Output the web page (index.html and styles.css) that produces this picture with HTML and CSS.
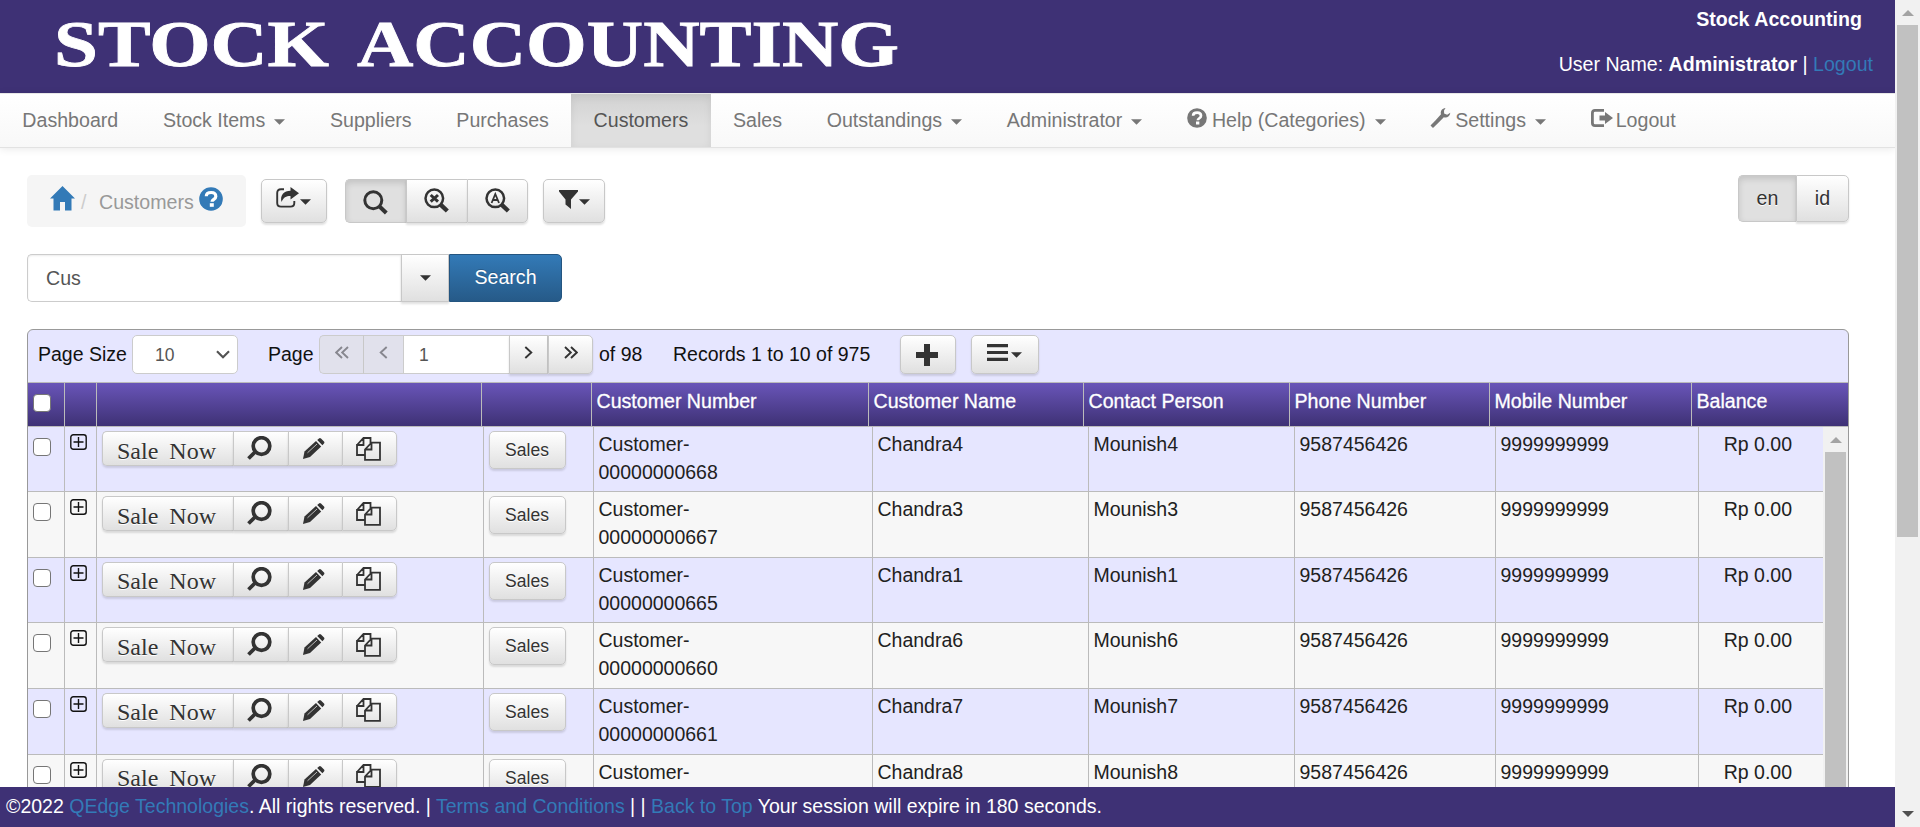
FILE: index.html
```html
<!DOCTYPE html>
<html lang="en">
<head>
<meta charset="utf-8">
<title>Customers - Stock Accounting</title>
<link rel="stylesheet" href="styles.css">
</head>
<body>
<svg width="0" height="0" class="defs" aria-hidden="true">
  <symbol id="i-home" viewBox="0 0 25 25"><path d="M12.5 0L25 12.5H21.5V24.5H15V16H10V24.5H3.5V12.5H0Z"/></symbol>
  <symbol id="i-help" viewBox="0 0 24 24"><circle cx="12" cy="12" r="11.8"/><path class="cut" d="M7.3 9.2C7.3 6.5 9.3 5.5 12.2 5.5S16.8 7 16.8 9.4C16.8 12.4 13 12.2 13 14.8" stroke-width="3.2"/><rect x="10.8" y="16.2" width="4" height="3.6" fill="#fff"/></symbol>
  <symbol id="i-share" viewBox="0 0 23 21"><path class="line" d="M8 2.2H5Q1.2 2.2 1.2 6V16Q1.2 19.6 5 19.6H14.5Q18.3 19.6 18.3 16V14" stroke-width="1.9"/><path d="M14.5 0L23 6.3L14.5 12.6V9C10 9 7.5 10.5 5.5 15C3.8 8 8 3.7 14.5 3.7Z"/></symbol>
  <symbol id="i-search" viewBox="0 0 25 25"><circle class="line" cx="10.3" cy="10.3" r="8.5" stroke-width="3"/><path class="line" d="M16 16L23.3 23" stroke-width="4"/></symbol>
  <symbol id="i-searchx" viewBox="0 0 25 25"><circle class="line" cx="10.3" cy="10.3" r="8.8" stroke-width="2.5"/><path class="line" d="M6.7 7L14 13.7M14 7L6.7 13.7" stroke-width="3"/><path class="line" d="M16.3 16.3L23.3 23" stroke-width="4.4"/></symbol>
  <symbol id="i-searcha" viewBox="0 0 25 25"><circle class="line" cx="10.3" cy="10.3" r="8.8" stroke-width="2.5"/><path class="line" d="M6.6 15L10.3 6L14 15M8 12H12.8" stroke-width="1.8"/><path class="line" d="M16.3 16.3L23.3 23" stroke-width="4.4"/></symbol>
  <symbol id="i-filter" viewBox="0 0 19 19"><path d="M0 0H19V1.5L12 9.5V19L6.5 14.5V9.5L0 1.5Z"/></symbol>
  <symbol id="i-caret" viewBox="0 0 12 6"><path d="M0 0H12L6 6Z"/></symbol>
  <symbol id="i-wrench" viewBox="0 0 21 21"><path d="M15.8 0C12 .3 10.2 3.4 11 6.5L5.4 12.8L0 18.4L2.6 21L8.3 15.4L14 9.8C17.3 10.8 20.4 8.7 20.8 5L17.5 7.2L14.3 5.8L14.2 2.6Z"/></symbol>
  <symbol id="i-logout" viewBox="0 0 22 18"><path class="line" d="M13 1.4H4Q1.4 1.4 1.4 4V14Q1.4 16.6 4 16.6H13" stroke-width="2.8"/><path d="M8.5 6.5H14V3L22 9L14 15V11.5H8.5Z"/></symbol>
  <symbol id="i-plus" viewBox="0 0 22 22"><path d="M8 0H14V8H22V14H14V22H8V14H0V8H8Z"/></symbol>
  <symbol id="i-bars" viewBox="0 0 21 17"><path d="M0 0H21V3.2H0ZM0 6.9H21V10.1H0ZM0 13.8H21V17H0Z"/></symbol>
  <symbol id="i-lens" viewBox="0 0 25 24"><circle class="line" cx="14.5" cy="10" r="8.3" stroke-width="3.7"/><path class="line" d="M8.5 15.5L1.5 22.5" stroke-width="3.8"/></symbol>
  <symbol id="i-pencil" viewBox="0 0 22 21"><path d="M1.5 13.5L13 3L18.2 8.5L7 19L0 21Z"/><path d="M14.2 2L16 .4Q17 -.3 18 .6L21 3.6Q21.8 4.6 21 5.5L19.4 7.3Z"/><path class="hair" d="M4.5 14.8L14 6"/></symbol>
  <symbol id="i-copy" viewBox="0 0 25 24"><path class="line" d="M1 8L7.5 1H14.5V6M9 18H1V8H7.5V1M9 12.5L15.5 5.6H24V22.8H9ZM9 12.5H15.5V5.6" stroke-width="1.8"/></symbol>
  <symbol id="i-expand" viewBox="0 0 17 16"><rect class="line" x=".8" y=".8" width="15.4" height="14.4" rx="2.5" stroke-width="1.4"/><path class="line" d="M8.5 3V13M3.5 8H13.5" stroke-width="1.4"/></symbol>
  <symbol id="i-chev" viewBox="0 0 9 13"><path class="line" d="M1.3 1L7.3 6.5L1.3 12" stroke-width="1.9"/></symbol>
  <symbol id="i-chev2" viewBox="0 0 14 13"><path class="line" d="M1 1L6.8 6.5L1 12M7 1L12.8 6.5L7 12" stroke-width="1.9"/></symbol>
  <symbol id="i-down" viewBox="0 0 14 9"><path class="line" d="M1 1.2L7 7.2L13 1.2" stroke-width="2.2"/></symbol>
</svg>
<div class="window">
  <div class="page">
    <header class="banner">
      <svg class="logo" width="860" height="70" viewBox="0 0 860 70"><text x="0" y="61" textLength="275" lengthAdjust="spacingAndGlyphs">STOCK</text><text x="303" y="61" textLength="542" lengthAdjust="spacingAndGlyphs">ACCOUNTING</text></svg>
      <div class="user">
        <div class="company">Stock Accounting</div>
        <div>User Name: <b>Administrator</b> | <a>Logout</a></div>
      </div>
    </header>
    <nav class="menu">
      <a class="item">Dashboard</a>
      <a class="item">Stock Items<svg class="caret"><use href="#i-caret"/></svg></a>
      <a class="item">Suppliers</a>
      <a class="item">Purchases</a>
      <a class="item active">Customers</a>
      <a class="item">Sales</a>
      <a class="item">Outstandings<svg class="caret"><use href="#i-caret"/></svg></a>
      <a class="item">Administrator<svg class="caret"><use href="#i-caret"/></svg></a>
      <a class="item"><svg class="nav-help"><use href="#i-help"/></svg>Help (Categories)<svg class="caret"><use href="#i-caret"/></svg></a>
      <a class="item"><svg class="nav-wrench"><use href="#i-wrench"/></svg>Settings<svg class="caret"><use href="#i-caret"/></svg></a>
      <a class="item"><svg class="nav-logout"><use href="#i-logout"/></svg>Logout</a>
    </nav>
    <main class="content">
      <div class="tools">
        <div class="crumbs"><svg class="home"><use href="#i-home"/></svg><span class="slash">/</span><span class="here">Customers</span><svg class="crumb-help"><use href="#i-help"/></svg></div>
        <div class="btn share"><svg class="share-icon"><use href="#i-share"/></svg><svg class="caret"><use href="#i-caret"/></svg></div>
        <div class="group search-group">
          <div class="btn on"><svg class="lens25"><use href="#i-search"/></svg></div>
          <div class="btn"><svg class="lens25"><use href="#i-searchx"/></svg></div>
          <div class="btn"><svg class="lens25"><use href="#i-searcha"/></svg></div>
        </div>
        <div class="btn filter"><svg class="filter-icon"><use href="#i-filter"/></svg><svg class="caret"><use href="#i-caret"/></svg></div>
        <div class="group lang"><div class="btn on">en</div><div class="btn">id</div></div>
      </div>
      <div class="search">
        <div class="query">Cus</div>
        <div class="btn drop"><svg class="caret"><use href="#i-caret"/></svg></div>
        <div class="btn go">Search</div>
      </div>
      <section class="panel">
        <div class="pager">
          <span class="size-label">Page Size</span>
          <div class="select">10<svg class="down"><use href="#i-down"/></svg></div>
          <span class="page-label">Page</span>
          <div class="group pages">
            <div class="btn off first"><svg class="chev2 flip"><use href="#i-chev2"/></svg></div>
            <div class="btn off prev"><svg class="chev flip"><use href="#i-chev"/></svg></div>
            <div class="number">1</div>
            <div class="btn next"><svg class="chev"><use href="#i-chev"/></svg></div>
            <div class="btn last"><svg class="chev2"><use href="#i-chev2"/></svg></div>
          </div>
          <span class="of">of 98</span>
          <span class="records">Records 1 to 10 of 975</span>
          <div class="btn add"><svg class="plus"><use href="#i-plus"/></svg></div>
          <div class="btn list"><svg class="bars"><use href="#i-bars"/></svg><svg class="caret"><use href="#i-caret"/></svg></div>
        </div>
        <div class="head">
          <div><span class="check"></span></div><div></div><div></div><div></div>
          <div>Customer Number</div><div>Customer Name</div><div>Contact Person</div><div>Phone Number</div><div>Mobile Number</div><div>Balance</div>
        </div>
        <div class="body">
          <div class="rows" id="rows"></div>
          <div class="bar inner"><svg class="arrow"><use href="#i-caret"/></svg><div class="thumb"></div></div>
        </div>
      </section>
    </main>
    <footer class="footer">©2022 <a>QEdge Technologies</a>. All rights reserved. | <a>Terms and Conditions</a> | | <a>Back to Top</a> Your session will expire in 180 seconds.</footer>
  </div>
  <div class="bar outer"><svg class="arrow"><use href="#i-caret"/></svg><div class="thumb"></div><svg class="arrow bottom"><use href="#i-caret"/></svg></div>
</div>
<script src="rows.js"></script>
</body>
</html>
```

FILE: styles.css
```css
* { box-sizing: border-box; }
body { margin: 0; font: 19.6px/28px "Liberation Sans", Arial, sans-serif; color: #212121; background: #fff; overflow: hidden; }
svg { fill: currentColor; flex: none; display: block; }
.defs { position: absolute; }
.line { fill: none; stroke: currentColor; }
.cut { fill: none; stroke: #fff; }
.hair { fill: none; stroke: #bbb; stroke-width: 1; }
a { color: #337ab7; }
.window { display: flex; height: 827px; }
.page { width: 1895px; display: flex; flex-direction: column; }

.banner { height: 93px; flex: none; background: #3e3175; color: #fff; display: flex; justify-content: space-between; }
.logo { margin: 5px 0 0 54px; overflow: visible; }
.logo text { font: bold 65px "Liberation Serif", serif; fill: #fff; stroke: #fff; stroke-width: .8; }
.user { padding: 5px 22px 0 0; text-align: right; }
.company { font-weight: bold; margin: 0 11px 17px 0; }

.menu { height: 55px; flex: none; display: flex; border-top: 1px solid #e7e7e7; border-bottom: 1px solid #e2e2e2; background: linear-gradient(#fff, #f8f8f8); box-shadow: 0 1px 8px rgba(0,0,0,.09); }
.item { display: flex; align-items: center; padding: 0 22.35px 2px; color: #777; }
.item.active { color: #555; background: linear-gradient(#d2d2d2, #dfdfdf 60%); box-shadow: inset 0 3px 9px rgba(0,0,0,.07); }
.caret { width: 11px; height: 6px; }
.item .caret { margin: 5px 0 0 9px; }
.nav-help { width: 20px; height: 20px; margin: -4px 5px 0 0; }
.nav-wrench { width: 21px; height: 20px; margin: -4px 4px 0 0; }
.nav-logout { width: 22px; height: 18px; margin: -3px 3px 0 0; }

.content { flex: 1; min-height: 0; overflow: hidden; padding: 27px 46px 0 27px; }
.btn { display: flex; align-items: center; justify-content: center; border: 1px solid #c8c8c8; border-radius: 5px; color: #333; background: linear-gradient(#fff, #e0e0e0); box-shadow: 0 2px 2px rgba(0,0,0,.12); text-shadow: 0 1px 0 #fff; }
.group { display: flex; }
.group > .btn { border-radius: 0; }
.group > .btn + .btn { border-left: 1px solid #c8c8c8; border-right: 0; }
.group > :first-child { border-radius: 5px 0 0 5px; border-right: 0; }
.group > .btn:last-child { border-radius: 0 5px 5px 0; border-right: 1px solid #c8c8c8; }
.group > .on { background: #e0e0e0; box-shadow: inset 0 3px 6px rgba(0,0,0,.13); }

.tools { display: flex; align-items: flex-start; height: 79px; }
.crumbs { width: 219px; height: 52px; border-radius: 5px; background: #f5f5f5; display: flex; padding-left: 23px; }
.home { width: 25px; height: 25px; margin-top: 11px; color: #337ab7; }
.slash { margin: 13px 0 0 6px; color: #ccc; width: 18px; }
.here { margin-top: 13px; color: #999; width: 100px; }
.crumb-help { width: 24px; height: 24px; margin: 12px 0 0 0; color: #337ab7; }
.share { width: 66px; height: 44px; margin: 4px 0 0 15px; padding-right: 2px; }
.share-icon { width: 23px; height: 21px; margin-top: -7px; }
.tools .btn .caret { margin: 2px 0 0 1px; }
.search-group { margin: 4px 0 0 18px; height: 44px; }
.search-group .btn { width: 61px; padding-right: 1px; }
.lens25 { width: 25px; height: 25px; margin-top: -2px; }
.on .lens25 { margin-top: 2px; }
.filter { width: 62px; height: 44px; margin: 4px 0 0 15px; }
.filter-icon { width: 19px; height: 19px; margin-top: -4px; }
.lang { margin-left: auto; height: 47px; }
.lang .btn { width: 58px; padding-bottom: 2px; }
.lang .btn:last-child { width: 53px; }

.search { display: flex; height: 48px; }
.query { width: 374px; border: 1px solid #ccc; border-right: 0; border-radius: 5px 0 0 5px; padding: 9px 18px; color: #555; box-shadow: inset 0 1px 2px rgba(0,0,0,.08); }
.drop { width: 48px; border-radius: 0; }
.go { width: 113px; border-radius: 0 5px 5px 0; border-color: #245580; color: #fff; background: linear-gradient(#337ab7, #265a88); text-shadow: 0 -1px 0 rgba(0,0,0,.2); box-shadow: none; padding-bottom: 2px; }

.panel { margin-top: 27px; width: 1822px; height: 600px; border: 1px solid #999; border-radius: 6px 6px 0 0; background: #e6e6ff; overflow: hidden; display: flex; flex-direction: column; }
.pager { display: flex; height: 53px; flex: none; padding-top: 5px; border-bottom: 1px solid #bbb; color: #111; line-height: 39px; font-size: 19.5px; }
.pager .btn, .pager .number, .select { height: 39px; }
.size-label { width: 94px; margin-left: 10px; }
.select { width: 106px; border: 1px solid #ccc; border-radius: 5px; background: #fff; color: #555; font-size: 17.5px; line-height: 38px; padding: 0 7px 0 22px; display: flex; justify-content: space-between; align-items: center; }
.down { width: 14px; height: 9px; }
.page-label { margin-left: 30px; width: 51px; }
.first { width: 44px; } .prev { width: 40px; } .next { width: 39px; } .last { width: 45px; }
.number { width: 106px; background: #fff; border: 1px solid #ccc; border-right: 0; padding-left: 15px; color: #555; font-size: 17.5px; line-height: 38px; }
.pages > .off { background: #e1e1ec; color: #87878f; border-color: #ccc; box-shadow: none; }
.chev { width: 9px; height: 13px; margin-top: -4px; }
.chev2 { width: 14px; height: 13px; margin-top: -4px; }
.flip { transform: scaleX(-1); }
.of { margin-left: 6px; width: 74px; }
.records { width: 227px; }
.add { width: 56px; padding-right: 2px; }
.plus { width: 22px; height: 22px; margin-top: 1px; }
.list { width: 68px; margin-left: 15px; padding-right: 2px; }
.bars { width: 21px; height: 17px; margin: -4px 3px 0 0; }
.list .caret { margin-top: 1px; }

.head { display: grid; grid-template-columns: 37px 32px 385px 110px 277px 215px 206px 200px 202px 1fr; height: 44px; flex: none; background: linear-gradient(#6955b8, #3e3175); color: #fff; border-bottom: 1px solid #bbb; line-height: 36px; -webkit-text-stroke: .3px #fff; }
.head > div { border-right: 1px solid #bbb; padding-left: 4.5px; }
.head > div:last-child { border-right: 0; }
.check { display: block; width: 18px; height: 18px; border: 1.5px solid #767676; border-radius: 4px; background: #fff; }
.head .check { margin: 11px 0 0 0; }
.body { display: flex; flex: 1; min-height: 0; }
.rows { width: 1795px; font-size: 19.5px; }
.row { display: grid; grid-template-columns: 37px 32px 387px 110px 279px 216px 206px 201px 203px 1fr; height: 65.6px; border-bottom: 1px solid #bbb; }
.row:first-child { height: 65.2px; }
.row:nth-child(even) { background: #f7f7f7; }
.row > div { border-right: 1px solid #bbb; padding: 3px 4px 0 4.5px; }
.row > div:last-child { border-right: 0; text-align: right; padding-right: 31px; }
.row .check { margin-top: 8px; }
.expand { width: 17px; height: 16px; margin: 4px 0 0 0; color: #111; }
.row .actions { height: 35px; margin-top: 1px; }
.row .now { width: 131px; font: 24px/30px "Liberation Serif", "Times New Roman", serif; word-spacing: 5px; padding: 4px 2px 0 0; }
.view { width: 55px; } .edit { width: 54px; } .dup { width: 55px; }
.lens { width: 25px; height: 24px; margin: -1px 2px 0 0; }
.pencil { width: 22px; height: 21px; margin-right: 3px; }
.copy { width: 25px; height: 24px; margin-right: 1px; }
.row .sales { width: 77px; height: 38px; margin-top: 1px; font-size: 17.5px; }

.bar { width: 25px; flex: none; background: #f1f1f1; display: flex; flex-direction: column; align-items: center; }
.arrow { width: 12px; height: 6px; margin-top: 10px; color: #a3a3a3; transform: scaleY(-1); }
.arrow.bottom { transform: none; margin: auto 0 10px; color: #505050; }
.thumb { width: 21px; background: #c1c1c1; }
.outer .thumb { height: 512px; margin-top: 9px; }
.inner .thumb { flex: 1; margin-top: 9px; }

.footer { height: 40px; flex: none; background: #3e3175; color: #fff; padding: 5px 6px; font-size: 19.52px; }
```

FILE: rows.js
```js
const customers = [["668", 4], ["667", 3], ["665", 1], ["660", 6], ["661", 7], ["662", 8]];
const icon = (cls, id) => `<svg class="${cls}"><use href="#${id}"/></svg>`;
document.getElementById("rows").innerHTML = customers.map(([num, n]) => `
  <div class="row">
    <div><span class="check"></span></div>
    <div>${icon("expand", "i-expand")}</div>
    <div><div class="group actions">
      <div class="btn now">Sale Now</div>
      <div class="btn view">${icon("lens", "i-lens")}</div>
      <div class="btn edit">${icon("pencil", "i-pencil")}</div>
      <div class="btn dup">${icon("copy", "i-copy")}</div>
    </div></div>
    <div><div class="btn sales">Sales</div></div>
    <div>Customer-<br>00000000${num}</div>
    <div>Chandra${n}</div>
    <div>Mounish${n}</div>
    <div>9587456426</div>
    <div>9999999999</div>
    <div>Rp 0.00</div>
  </div>`).join("");
```
